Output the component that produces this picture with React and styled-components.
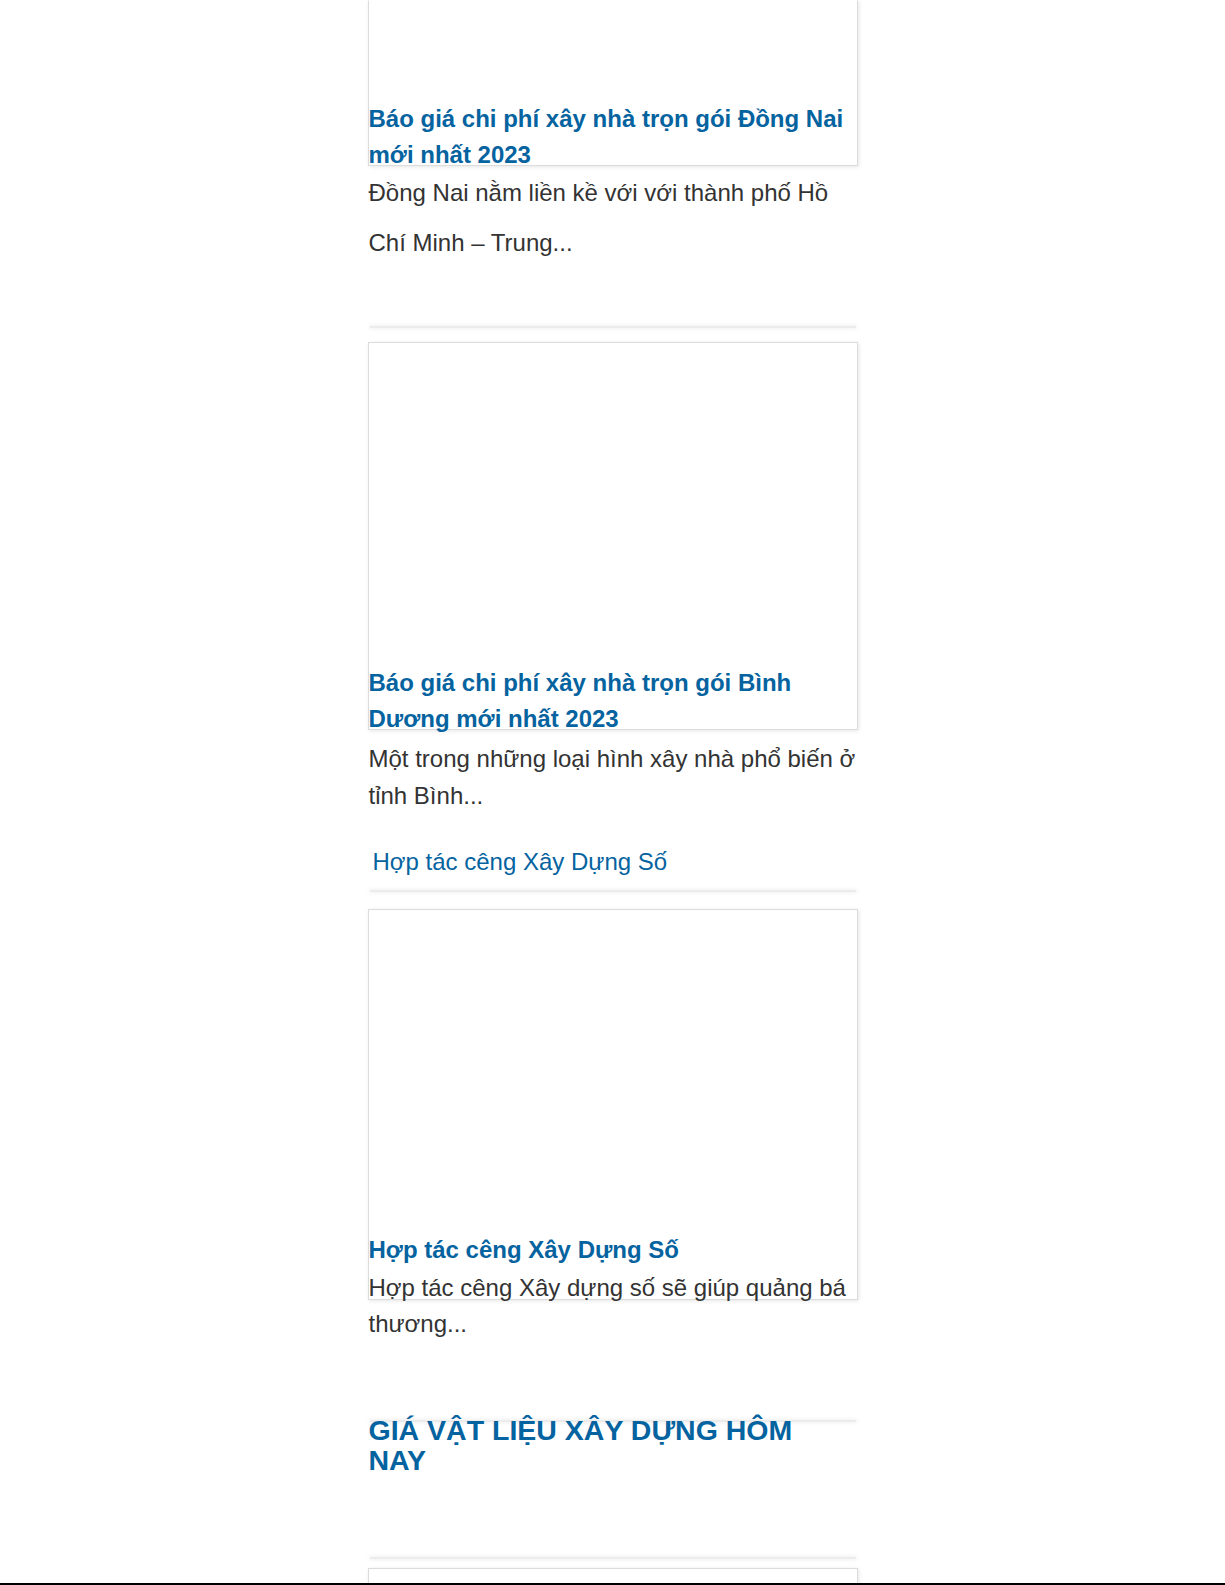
import React from 'react';
import styled, { createGlobalStyle } from 'styled-components';

const GlobalStyle = createGlobalStyle`
  html, body {
    margin: 0;
    padding: 0;
    background: #ffffff;
  }
  body {
    font-family: "Liberation Sans", Arial, sans-serif;
  }
`;

const Page = styled.div`
  width: 490px;
  margin: 0 auto;
  padding-bottom: 40px;
`;

const Separator = styled.div`
  height: 2px;
  margin: ${(p) => p.$top}px 2px ${(p) => p.$bottom}px;
  background: #ececec;
  box-shadow: 0 0 4px 1px rgba(0, 0, 0, 0.06);
`;

const Thumb = styled.div`
  box-sizing: border-box;
  height: ${(p) => p.$height}px;
  border: 1px solid #dcdcdc;
  border-top-color: ${(p) => (p.$cut ? 'transparent' : '#dcdcdc')};
  box-shadow: 1px 1px 4px rgba(0, 0, 0, 0.1);
  background: #fff;
`;

const Title = styled.a`
  display: block;
  position: relative;
  margin-top: ${(p) => p.$pull || -65}px;
  padding-left: 1px;
  font-size: 24px;
  font-weight: 700;
  line-height: 36px;
  color: #05639f;
  text-decoration: none;
`;

const Excerpt = styled.p`
  margin: ${(p) => p.$top}px 0 0;
  padding-left: 1px;
  font-size: 24px;
  line-height: ${(p) => p.$lh}px;
  color: #333333;
`;

const MoreLink = styled.a`
  display: block;
  margin-top: 33px;
  padding-left: 5px;
  font-size: 24px;
  line-height: 30px;
  color: #05639f;
  text-decoration: none;
`;

const SectionHeading = styled.h2`
  position: relative;
  margin: -7px 0 0;
  padding: 0 40px 0 1px;
  font-size: 28.5px;
  font-weight: 700;
  line-height: 30px;
  color: #05639f;
`;

const BottomEdge = styled.div`
  position: fixed;
  left: 0;
  right: 0;
  bottom: 0;
  height: 2px;
  background: #000;
`;

const posts = [
  {
    title: 'Báo giá chi phí xây nhà trọn gói Đồng Nai mới nhất 2023',
    excerpt: 'Đồng Nai nằm liền kề với với thành phố Hồ Chí Minh – Trung...',
    lh: 50,
    top: -5,
  },
  {
    title: 'Báo giá chi phí xây nhà trọn gói Bình Dương mới nhất 2023',
    excerpt: 'Một trong những loại hình xây nhà phổ biến ở tỉnh Bình...',
    lh: 37,
    top: 3,
  },
  {
    title: 'Hợp tác cêng Xây Dựng Số',
    excerpt: 'Hợp tác cêng Xây dựng số sẽ giúp quảng bá thương...',
    lh: 36,
    top: 2,
  },
];

const App = () => {
  const [first, second, third] = posts;
  return (
    <>
      <GlobalStyle />
      <Page>
        <Thumb $height={166} $cut />
        <Title href="#">{first.title}</Title>
        <Excerpt $lh={first.lh} $top={first.top}>{first.excerpt}</Excerpt>

        <Separator $top={58} $bottom={14} />
        <Thumb $height={388} />
        <Title href="#">{second.title}</Title>
        <Excerpt $lh={second.lh} $top={second.top}>{second.excerpt}</Excerpt>
        <MoreLink href="#">Hợp tác cêng Xây Dựng Số</MoreLink>

        <Separator $top={13} $bottom={17} />
        <Thumb $height={391} />
        <Title href="#" $pull={-68}>{third.title}</Title>
        <Excerpt $lh={third.lh} $top={third.top}>{third.excerpt}</Excerpt>

        <Separator $top={78} $bottom={0} />
        <SectionHeading>GIÁ VẬT LIỆU XÂY DỰNG HÔM NAY</SectionHeading>

        <Separator $top={82} $bottom={9} />
        <Thumb $height={300} />
      </Page>
      <BottomEdge />
    </>
  );
};

export default App;
